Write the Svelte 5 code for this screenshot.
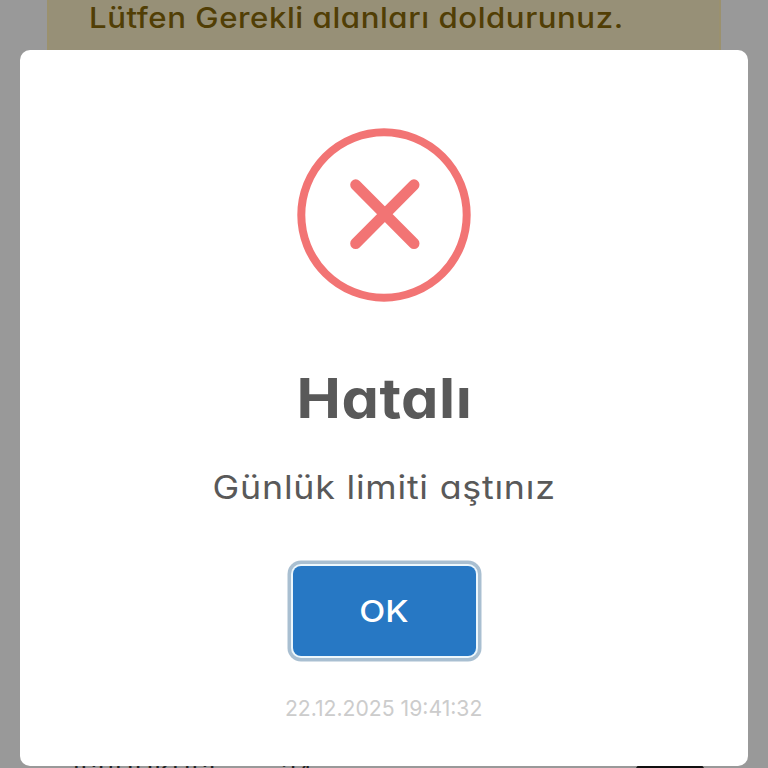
<script lang="ts">
	let open = $state(true);

	const alert = {
		title: 'Hatalı',
		text: 'Günlük limiti aştınız',
		footer: '22.12.2025 19:41:32'
	};
</script>

<div class="page">
	<div class="warning"><span>Lütfen Gerekli alanları doldurunuz.</span></div>
	<div class="account">
		<div class="bank">İSBUUKUSI ‾</div>
		<div class="digits">34</div>
		<div class="toggle"></div>
	</div>
</div>

{#if open}
	<div class="backdrop">
		<div class="popup" role="alertdialog" aria-labelledby="title" aria-describedby="text">
			<svg class="icon" viewBox="0 0 174 174" fill="none" stroke="#f27474">
				<circle cx="87" cy="87" r="82.7" stroke-width="8" />
				<path d="M58.7 56.8 117 115.5M117 56.8 58.7 115.5" stroke-width="11" stroke-linecap="round" />
			</svg>
			<h2 id="title"><span>{alert.title}</span></h2>
			<p id="text"><span>{alert.text}</span></p>
			<button onclick={() => (open = false)}><span>OK</span></button>
			<footer><span>{alert.footer}</span></footer>
		</div>
	</div>
{/if}

<style>
	:global(body) {
		background: #999;
		font-family: Inter, 'Open Sans', sans-serif;
		font-feature-settings: 'cv11';
		overflow: hidden;
	}

	span {
		display: inline-block;
		transform: scaleX(var(--stretch, 1));
	}

	.page {
		height: 768px;
		display: flex;
		flex-direction: column;
		justify-content: space-between;
		overflow: hidden;
	}

	.warning {
		--stretch: 1.094;
		box-sizing: border-box;
		height: 90px;
		margin: 0 47px;
		padding-left: 40px;
		border: solid #9b916e;
		border-width: 0 2px;
		background: #979077;
		color: #513e05;
		font-size: 28.5px;
		font-weight: 550;
		line-height: 35px;
		letter-spacing: 0.5px;
		white-space: nowrap;
	}

	.warning span {
		transform-origin: left;
	}

	.account {
		height: 4px;
		flex: none;
		display: flex;
		padding: 0 63px 0 73px;
		color: #222;
		font-size: 25px;
		line-height: 17px;
	}

	.bank {
		width: 208px;
		letter-spacing: 1px;
		white-space: nowrap;
	}

	.toggle {
		width: 70px;
		height: 40px;
		margin-left: auto;
		border-radius: 8px;
		background: #111;
	}

	.backdrop {
		position: fixed;
		inset: 0;
		box-sizing: border-box;
		padding: 49.5px 20px 2.5px;
	}

	.popup {
		box-sizing: border-box;
		height: 100%;
		padding-top: 78px;
		display: flex;
		flex-direction: column;
		align-items: center;
		border-radius: 10px;
		background: #fff;
		color: #595959;
	}

	.icon {
		width: 174px;
		height: 174px;
		flex: none;
	}

	h2 {
		--stretch: 1.08;
		margin: 61px 0 0;
		font-size: 55px;
		font-weight: 700;
		line-height: 70px;
		letter-spacing: 0.5px;
	}

	p {
		--stretch: 1.085;
		margin: 34px 0 0;
		font-size: 33px;
		font-weight: 400;
		line-height: 40px;
		letter-spacing: 0.7px;
	}

	button {
		--stretch: 1.13;
		width: 183px;
		height: 90px;
		flex: none;
		margin: 59px 0 0;
		padding: 1px 0 0;
		border: 0;
		border-radius: 8px;
		background: #2778c4;
		box-shadow: 0 0 0 2px #edf7fc, 0 0 0 5.5px #a9bfd1;
		color: #fff;
		font: inherit;
		font-size: 30px;
		font-weight: 500;
	}

	footer {
		--stretch: 0.962;
		margin-top: 38.5px;
		color: #ccc;
		font-size: 22px;
		line-height: 28px;
	}
</style>
